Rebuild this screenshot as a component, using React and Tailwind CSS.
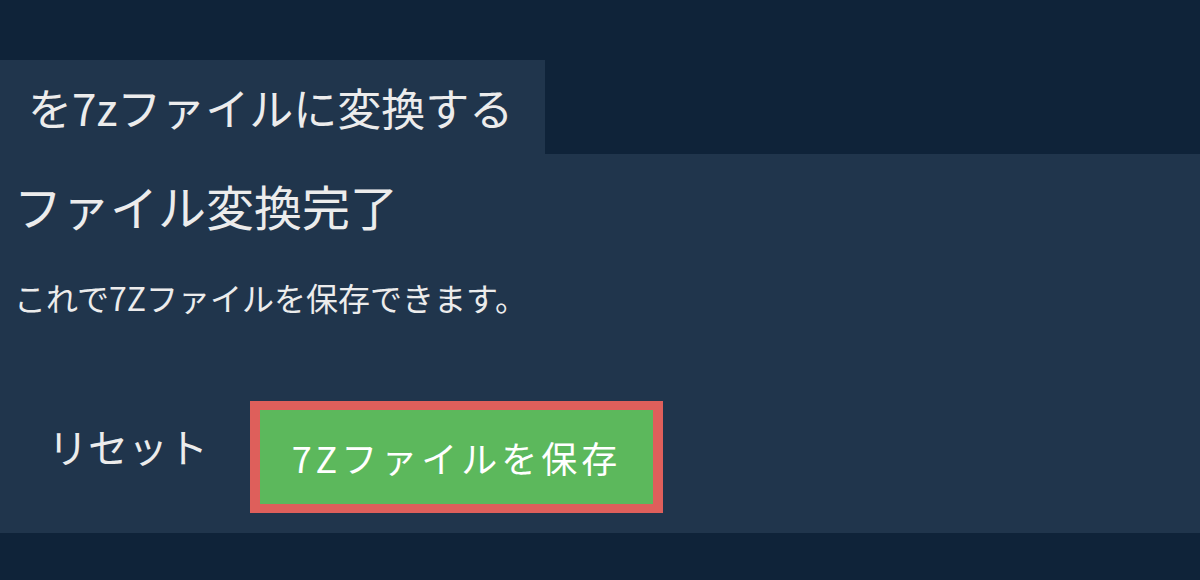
import React from 'react';

const font = { fontFamily: '"Noto Sans CJK JP", "Noto Sans", sans-serif' };

const App = () => {
  return (
    <div className="min-h-screen bg-[#0f2339] pt-[60px] text-[#ececec]" style={font}>
      <div className="w-[545px] h-[94px] bg-[#20354c] flex items-center pl-[28px] text-[44px] leading-none">
        を7zファイルに変換する
      </div>

      <div className="bg-[#20354c] h-[379px] px-[14px] pt-[21px] flex flex-col">
        <h2 className="text-[48px] leading-[60px]">ファイル変換完了</h2>
        <p className="mt-[42px] text-[32px] leading-[40px]">これで7Zファイルを保存できます。</p>

        <div className="mt-[84px] flex items-center">
          <button className="pl-[34px] pr-[36px] pb-[22px] text-[40px] leading-none text-[#ececec]">リセット</button>
          <button className="ml-[6px] w-[413px] h-[112px] border-x-[10px] border-y-[9px] border-[#de5f5b] bg-[#5cb85c] text-white text-[36px] tracking-[4px] leading-none">
            7Zファイルを保存
          </button>
        </div>
      </div>
    </div>
  );
};

export default App;
